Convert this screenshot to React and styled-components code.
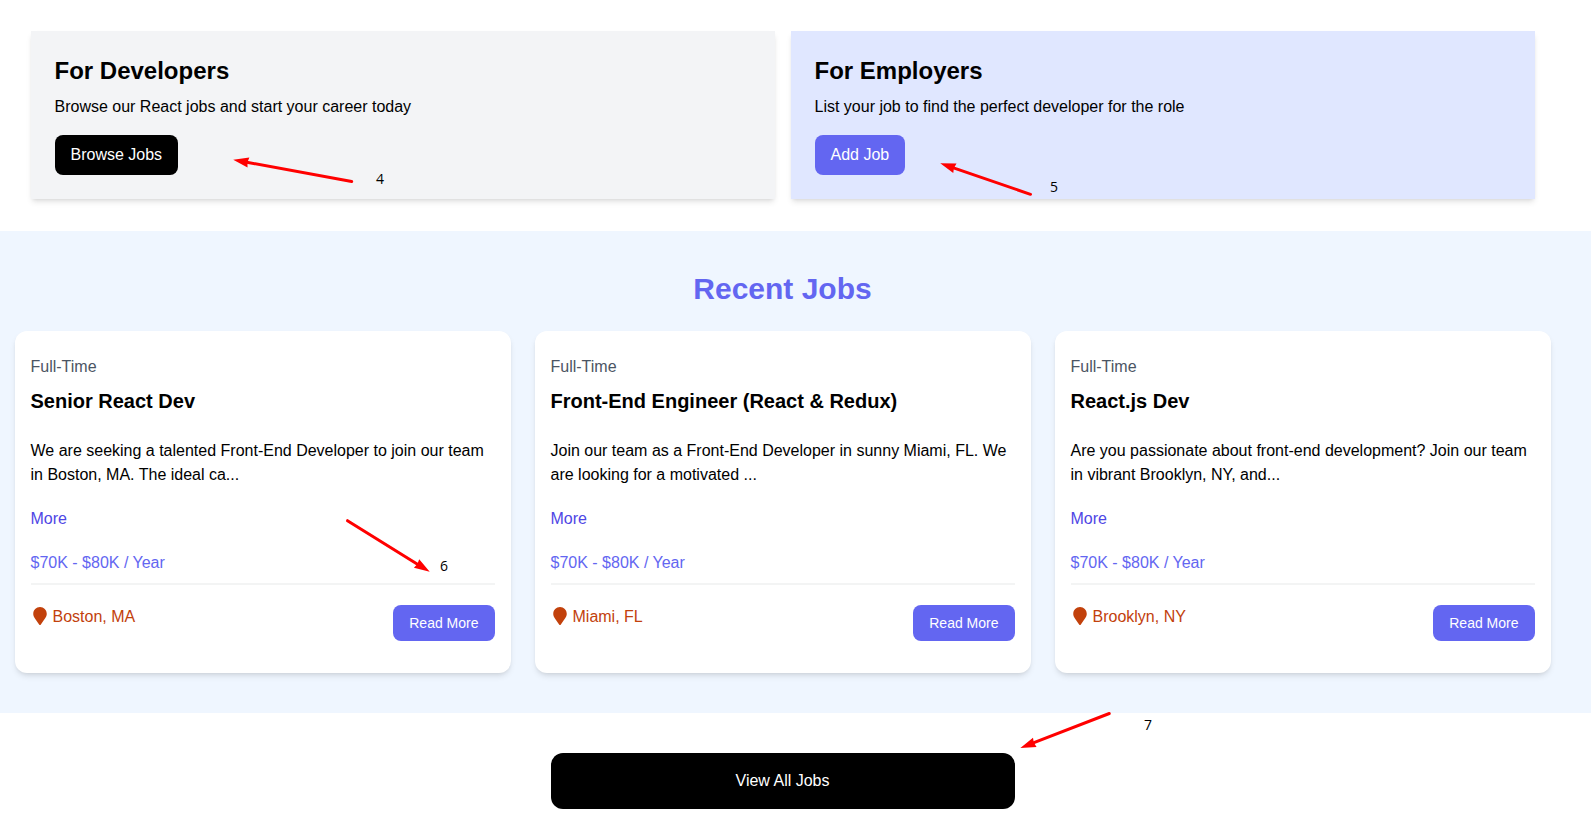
import React from "react";
import styled, { createGlobalStyle } from "styled-components";
import { FaMapMarker } from "react-icons/fa";

const GlobalStyle = createGlobalStyle`
  *, *::before, *::after { box-sizing: border-box; }
  body {
    margin: 0;
    background: #fff;
    color: #000;
    font-family: "Liberation Sans", Arial, sans-serif;
    font-size: 16px;
    line-height: 24px;
  }
  h2, h3, p { margin: 0; }
  a { color: inherit; text-decoration: none; }
`;

const shadow = "0 4px 6px -1px rgba(0,0,0,.1), 0 2px 4px -2px rgba(0,0,0,.1)";

const Page = styled.div`
  position: relative;
  height: 824px;
  overflow: hidden;
`;

const Container = styled.div`
  width: 1536px;
  margin-left: 14.5px;
`;

const Panels = styled(Container)`
  display: grid;
  grid-template-columns: 1fr 1fr;
  gap: 16px;
  padding: 31px 16px 32px;
`;

const Panel = styled.section`
  padding: 24px;
  background: ${(p) => p.$bg};
  box-shadow: ${shadow};
`;

const PanelTitle = styled.h2`
  font-size: 24px;
  line-height: 32px;
  font-weight: 700;
`;

const PanelText = styled.p`
  margin: 8px 0 16px;
`;

const Button = styled.a`
  display: inline-block;
  padding: 8px 16px;
  border-radius: 8px;
  color: #fff;
  background: ${(p) => (p.$dark ? "#000" : "#6366f1")};
  font-size: ${(p) => (p.$small ? "14px" : "16px")};
  line-height: ${(p) => (p.$small ? "20px" : "24px")};
  vertical-align: top;
`;

const Jobs = styled.section`
  padding: 40px 0;
  background: #eff6ff;
`;

const JobsTitle = styled.h2`
  margin-bottom: 24px;
  color: #6366f1;
  font-size: 30px;
  line-height: 36px;
  font-weight: 700;
  text-align: center;
`;

const JobGrid = styled.div`
  display: grid;
  grid-template-columns: repeat(3, 1fr);
  gap: 24px;
`;

const Card = styled.article`
  padding: 24px 16px 32px;
  border-radius: 12px;
  background: #fff;
  box-shadow: ${shadow};
`;

const JobType = styled.p`
  margin-bottom: 8px;
  color: #4b5563;
`;

const JobTitle = styled.h3`
  margin-bottom: 24px;
  font-size: 20px;
  line-height: 28px;
  font-weight: 700;
`;

const Description = styled.p`
  margin-bottom: 20px;
`;

const MoreLink = styled.a`
  display: block;
  width: fit-content;
  margin-bottom: 20px;
  && { color: #4f46e5; }
`;

const Salary = styled.p`
  color: #6366f1;
`;

const Divider = styled.div`
  height: 2px;
  margin: 8px 0 20px;
  background: #f3f4f4;
`;

const CardFooter = styled.div`
  display: flex;
  justify-content: space-between;
  align-items: flex-start;
`;

const Location = styled.div`
  display: flex;
  align-items: flex-start;
  gap: 4px;
  color: #c2410c;
  svg { margin-top: 2px; }
`;

const ViewAll = styled.a`
  display: block;
  width: 464px;
  margin: 40px auto 0;
  padding: 16px 24px;
  border-radius: 12px;
  && { color: #fff; }
  background: #000;
  text-align: center;
`;

const Overlay = styled.svg`
  position: absolute;
  top: 0;
  left: 0;
  pointer-events: none;
`;

const Label = styled.span`
  position: absolute;
  left: ${(p) => p.$x}px;
  top: ${(p) => p.$y}px;
  font-family: "Open Sans", sans-serif;
  font-size: 14px;
  line-height: 20px;
`;

const jobs = [
  {
    title: "Senior React Dev",
    text: "We are seeking a talented Front-End Developer to join our team in Boston, MA. The ideal ca...",
    place: "Boston, MA",
  },
  {
    title: "Front-End Engineer (React & Redux)",
    text: "Join our team as a Front-End Developer in sunny Miami, FL. We are looking for a motivated ...",
    place: "Miami, FL",
  },
  {
    title: "React.js Dev",
    text: "Are you passionate about front-end development? Join our team in vibrant Brooklyn, NY, and...",
    place: "Brooklyn, NY",
  },
];

const arrows = [
  { tail: [351.7, 181.6], tip: [233.7, 159.8] },
  { tail: [1030.5, 194.3], tip: [940.7, 163.4] },
  { tail: [347.5, 520.7], tip: [429.3, 571.5] },
  { tail: [1109.3, 713.5], tip: [1020.8, 747.7] },
];

const labels = [
  { text: "4", x: 376, y: 169 },
  { text: "5", x: 1050, y: 177 },
  { text: "6", x: 440, y: 556 },
  { text: "7", x: 1144, y: 715 },
];

function Arrow({ tail, tip }) {
  const dx = tip[0] - tail[0];
  const dy = tip[1] - tail[1];
  const length = Math.hypot(dx, dy);
  const angle = (Math.atan2(dy, dx) * 180) / Math.PI;
  return (
    <g transform={`translate(${tail[0]} ${tail[1]}) rotate(${angle})`}>
      <line x1="0" y1="0" x2={length - 12} y2="0" stroke="#f00" strokeWidth="3" strokeLinecap="round" />
      <polygon points={`${length + 0.5},0 ${length - 15},-5 ${length - 14},0 ${length - 15},5`} fill="#f00" />
    </g>
  );
}

function JobCard({ job }) {
  return (
    <Card>
      <JobType>Full-Time</JobType>
      <JobTitle>{job.title}</JobTitle>
      <Description>{job.text}</Description>
      <MoreLink href="#">More</MoreLink>
      <Salary>$70K - $80K / Year</Salary>
      <Divider />
      <CardFooter>
        <Location>
          <FaMapMarker size={18} />
          {job.place}
        </Location>
        <Button href="#" $small>Read More</Button>
      </CardFooter>
    </Card>
  );
}

export default function App() {
  return (
    <Page>
      <GlobalStyle />
      <Panels>
        <Panel $bg="#f3f4f6">
          <PanelTitle>For Developers</PanelTitle>
          <PanelText>Browse our React jobs and start your career today</PanelText>
          <Button href="#" $dark>Browse Jobs</Button>
        </Panel>
        <Panel $bg="#e0e7ff">
          <PanelTitle>For Employers</PanelTitle>
          <PanelText>List your job to find the perfect developer for the role</PanelText>
          <Button href="#">Add Job</Button>
        </Panel>
      </Panels>
      <Jobs>
        <Container>
          <JobsTitle>Recent Jobs</JobsTitle>
          <JobGrid>
            {jobs.map((job) => (
              <JobCard key={job.title} job={job} />
            ))}
          </JobGrid>
        </Container>
      </Jobs>
      <Container>
        <ViewAll href="#">View All Jobs</ViewAll>
      </Container>
      <Overlay width="1591" height="824" viewBox="0 0 1591 824">
        {arrows.map((arrow) => (
          <Arrow key={arrow.tip[0]} {...arrow} />
        ))}
      </Overlay>
      {labels.map((label) => (
        <Label key={label.text} $x={label.x} $y={label.y}>{label.text}</Label>
      ))}
    </Page>
  );
}
